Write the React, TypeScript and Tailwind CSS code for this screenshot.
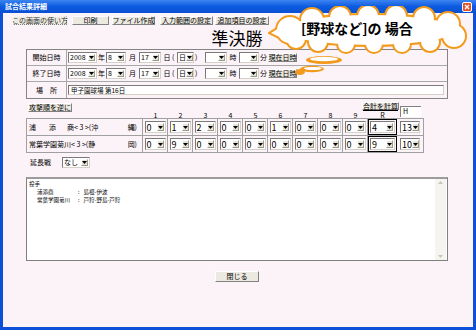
import React from 'react';

const Arrow = () => (
  <span className="w-[7px] my-[1px] mr-[1px] bg-[#e6e3d8] border border-t-white border-l-white border-r-[#9a978c] border-b-[#9a978c] flex items-center justify-center">
    <svg width="5" height="3" viewBox="0 0 5 3">
      <path d="M0 0H5L2.5 3Z" fill="#000" />
    </svg>
  </span>
);

function Sel({ v, className = '', digit = false }: { v: string; className?: string; digit?: boolean }) {
  return (
    <div className={`flex items-stretch bg-white border border-t-[#7a7a7a] border-l-[#7a7a7a] border-r-[#d4d0c8] border-b-[#d4d0c8] ${className}`}>
      <span className={`flex-1 flex items-center pl-[1px] leading-none ${digit ? 'text-[9px]' : 'text-[7px]'}`}>{v}</span>
      <Arrow />
    </div>
  );
}

function Btn({ children, className = '' }: { children: React.ReactNode; className?: string }) {
  return (
    <div className={`flex items-center justify-center bg-[#ece9e0] border border-t-white border-l-white border-r-[#808080] border-b-[#808080] text-[7px] leading-none whitespace-nowrap ${className}`}>
      {children}
    </div>
  );
}

const DateRow = ({ label }: { label: string }) => (
  <div className="flex items-center h-[16px] border-b border-[#a8a8a8]">
    <div className="w-[40px] h-full flex items-center justify-center border-r border-[#a8a8a8] text-[7px]">{label}</div>
    <div className="flex items-center text-[7px] leading-none">
      <Sel v="2008" className="ml-[1px] w-[29px] h-[11px]" />
      <span className="w-[9px] text-center">年</span>
      <Sel v="8" className="w-[20px] h-[11px]" />
      <span className="w-[13px] text-center">月</span>
      <Sel v="17" className="w-[22px] h-[11px]" />
      <span className="w-[16px] text-center">日 (</span>
      <Sel v="日" className="w-[17px] h-[11px]" />
      <span className="w-[11px] pl-[1px]">)</span>
      <Sel v="" className="w-[22px] h-[11px]" />
      <span className="w-[12px] text-center">時</span>
      <Sel v="" className="w-[20px] h-[11px]" />
      <span className="w-[9px] text-center">分</span>
      <Btn className="w-[29px] h-[9px] text-[6.5px]">現在日時</Btn>
    </div>
  </div>
);

const rows = [
  {
    team: (
      <span>
        浦<span className="ml-[13px]">添</span>
        <span className="ml-[11px]">商&lt; 3 &gt;(沖</span>
      </span>
    ),
    end: '縄)',
    scores: ['0', '1', '2', '0', '0', '1', '0', '0', '0'],
    r: '4',
    h: '13',
  },
  {
    team: <span>常葉学園菊川&lt; 3 &gt;(静</span>,
    end: '岡)',
    scores: ['0', '9', '0', '0', '0', '0', '0', '0', '0'],
    r: '9',
    h: '10',
  },
];

const innings = ['1', '2', '3', '4', '5', '6', '7', '8', '9'];

function Cloud() {
  const circles: [number, number, number][] = [
    [22, 24, 13], [44, 14, 11], [72, 11, 10], [100, 10, 10], [128, 10, 10], [156, 12, 10],
    [180, 18, 11], [186, 30, 11], [162, 36, 9], [134, 38, 8], [106, 38, 8], [78, 38, 8],
    [50, 36, 9], [28, 33, 9],
  ];
  const shapes = (fill: string, stroke?: string) => (
    <g fill={fill} stroke={stroke} strokeWidth={stroke ? 4 : 0}>
      {circles.map(([cx, cy, r], i) => (
        <circle key={i} cx={cx} cy={cy} r={r} />
      ))}
      <ellipse cx="102" cy="24" rx="86" ry="15" />
      <path d="M3 27 L16 19 L16 33 Z" />
    </g>
  );
  return (
    <div className="absolute left-[268px] top-[6px] w-[202px] h-[48px]">
      <svg width="202" height="48" viewBox="0 0 202 48" className="absolute inset-0">
        {shapes('#f29a1c', '#f29a1c')}
        {shapes('#ffffff')}
      </svg>
      <div className="absolute left-[33px] top-[12px] text-[14px] font-bold leading-[20px] whitespace-nowrap">
        [野球など]の 場合
      </div>
    </div>
  );
}

function Tail() {
  return (
    <svg width="60" height="26" viewBox="0 0 60 26" className="absolute left-[292px] top-[54px]">
      <ellipse cx="32" cy="6" rx="18" ry="4" fill="#f29a1c" />
      <ellipse cx="32" cy="5" rx="14" ry="2.2" fill="#ffffff" />
      <ellipse cx="20" cy="15" rx="12" ry="3.2" fill="#f29a1c" />
      <ellipse cx="21" cy="14.5" rx="9" ry="1.6" fill="#ffffff" />
      <ellipse cx="8" cy="18" rx="5" ry="3" fill="#f29a1c" />
    </svg>
  );
}

export default function App() {
  return (
    <div className="w-[476px] h-[330px] relative flex flex-col bg-[#0b50d6] font-['Noto_Sans_CJK_JP',sans-serif] text-black overflow-hidden">
      <div className="h-[13px] flex items-center bg-linear-to-b from-[#3b84f2] via-[#0b5be0] to-[#0a50d2] pl-[5px] pr-[4px]">
        <span className="text-[7px] font-bold text-white leading-none">試合結果詳細</span>
        <div className="ml-auto w-[10px] h-[10px] rounded-[2px] bg-[#e0552f] border border-white flex items-center justify-center">
          <svg width="6" height="6" viewBox="0 0 6 6">
            <path d="M1 1L5 5M5 1L1 5" stroke="#fff" strokeWidth="1.3" />
          </svg>
        </div>
      </div>

      <div className="flex-1 mx-[3px] mb-[3px] bg-[#fcf3f8] flex flex-col">
        <div className="flex items-center pt-[3px] pl-[10px] h-[12px]">
          <Btn className="w-[54px] h-[9px] border-dotted border-[#555] text-[#333]">この画面の使い方</Btn>
          <Btn className="ml-[5px] w-[37px] h-[9px]">印刷</Btn>
          <Btn className="ml-[3px] w-[43px] h-[9px]">ファイル作成</Btn>
          <Btn className="ml-[5px] w-[53px] h-[9px]">入力範囲の設定</Btn>
          <Btn className="ml-[2px] w-[54px] h-[9px]">追加項目の設定</Btn>
        </div>

        <div className="ml-[23px] w-[422px] flex flex-col">
          <div className="mt-[3px] h-[20px] text-center text-[17px] leading-[20px]">準決勝</div>

          <div className="mt-[1px] border border-[#848484] flex flex-col">
            <DateRow label="開始日時" />
            <DateRow label="終了日時" />
            <div className="flex items-center h-[16px]">
              <div className="w-[40px] h-full flex items-center justify-center border-r border-[#a8a8a8] text-[7px]">場　所</div>
              <div className="ml-[1px] w-[376px] h-[10px] bg-white border border-t-[#7a7a7a] border-l-[#7a7a7a] border-r-[#d4d0c8] border-b-[#d4d0c8] flex items-center pl-[2px] text-[6.5px] leading-none">
                甲子園球場 第16日
              </div>
            </div>
          </div>

          <div className="h-[13px] flex items-end">
            <Btn className="ml-[2px] w-[44px] h-[9px]">攻撃順を逆に</Btn>
            <Btn className="ml-[290px] self-start mt-[3px] w-[37px] h-[8px] underline">合計を計算</Btn>
            <div className="ml-[1px] self-start mt-[7px] -mb-[5px] w-[21px] h-[11px] bg-white border-t border-l border-[#808080] text-[7px] leading-none pl-[2px] pt-[1px]">H</div>
          </div>

          <div className="h-[6px] flex text-[7px] leading-[6px]">
            <div className="w-[117px]" />
            {innings.map((n) => (
              <div key={n} className="w-[25px] text-center">{n}</div>
            ))}
            <div className="w-[29px] text-center">R</div>
          </div>

          <div className="w-[398px] border border-[#a0a0a0] flex flex-col">
            {rows.map((row, ri) => (
              <div key={ri} className={`flex ${ri === 0 ? 'h-[17px] border-b border-[#a0a0a0]' : 'h-[16px]'}`}>
                <div className="w-[116px] flex items-center justify-between pl-[2px] pr-[5px] border-r border-[#a0a0a0] text-[7px] leading-none whitespace-nowrap">
                  {row.team}
                  <span>{row.end}</span>
                </div>
                {row.scores.map((s, i) => (
                  <div key={i} className="w-[25px] flex items-center justify-center border-r border-[#a0a0a0]">
                    <Sel v={s} digit className="w-[21px] h-[12px]" />
                  </div>
                ))}
                <div className="w-[29px] flex items-center justify-center shadow-[inset_0_0_0_1px_#000]">
                  <Sel v={row.r} digit className="w-[25px] h-[12px]" />
                </div>
                <div className="w-[26px] flex items-center justify-center">
                  <Sel v={row.h} digit className="w-[20px] h-[12px]" />
                </div>
              </div>
            ))}
          </div>

          <div className="mt-[2px] h-[15px] flex items-center">
            <span className="ml-[4px] text-[7px] leading-none">延長戦</span>
            <Sel v="なし" className="ml-[11px] w-[28px] h-[11px]" />
          </div>

          <div className="mt-[7px] h-[84px] w-[422px] bg-white border border-[#808080] border-t-2 border-t-[#9c9c9c] flex">
            <div className="flex-1 pl-[2px] pt-[1px] text-[5.5px] leading-[8px] whitespace-nowrap">
              <div>投手</div>
              <div className="flex ml-[8px]">
                <span className="w-[41px]">浦添商</span>
                <span>:</span>
                <span className="ml-[4px]">島根-伊波</span>
              </div>
              <div className="flex ml-[8px]">
                <span className="w-[41px]">常葉学園菊川</span>
                <span>:</span>
                <span className="ml-[4px]">戸狩-野島-戸狩</span>
              </div>
            </div>
            <div className="w-[11px] mr-[1px] bg-[#f5f4ef] flex flex-col justify-between items-center py-[2px]">
              <svg width="5" height="3" viewBox="0 0 5 3">
                <path d="M0 3L2.5 0L5 3Z" fill="#c8c6bc" />
              </svg>
              <svg width="5" height="3" viewBox="0 0 5 3">
                <path d="M0 0H5L2.5 3Z" fill="#c8c6bc" />
              </svg>
            </div>
          </div>

          <Btn className="self-center mt-[10px] w-[44px] h-[11px]">閉じる</Btn>
        </div>
      </div>

      <Cloud />
      <Tail />
    </div>
  );
}
